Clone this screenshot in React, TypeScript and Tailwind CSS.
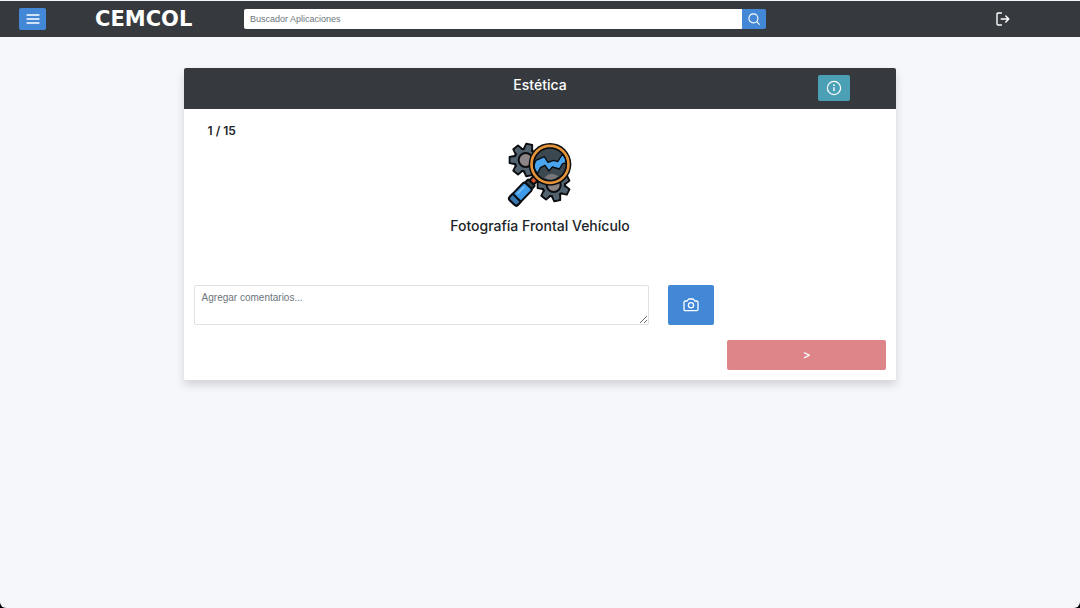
import React from 'react';

const gearTeeth = [0, 51.4, 102.9, 154.3, 205.7, 257.1, 308.6];

function Gear({ x, y, rotate }: { x: number; y: number; rotate: number }) {
  return (
    <g transform={`translate(${x} ${y}) rotate(${rotate})`}>
      <g fill="#52636f" stroke="#0b0d10" strokeWidth="6" strokeLinejoin="round">
        {gearTeeth.map((angle) => (
          <path key={angle} transform={`rotate(${angle})`} d="M-13 -30 L-9 -48 H9 L13 -30 Z" />
        ))}
        <circle r="34" />
      </g>
      <g fill="#52636f">
        {gearTeeth.map((angle) => (
          <path key={angle} transform={`rotate(${angle})`} d="M-10 -27 L-7 -45 H7 L10 -27 Z" />
        ))}
      </g>
      <circle r="21" fill="#8b8585" stroke="#0b0d10" strokeWidth="6" />
    </g>
  );
}

function InspectionIcon() {
  return (
    <svg viewBox="36 18 198 204" className="h-[68px] w-[66px]" aria-hidden="true">
      <Gear x={92} y={75} rotate={270} />
      <Gear x={176} y={150} rotate={270} />
      <g transform="translate(112 140) rotate(44)" stroke="#0b0d10" strokeWidth="6" strokeLinejoin="round">
        <rect x="-9" y="-18" width="18" height="24" fill="#d9532c" />
        <rect x="-14" y="3" width="28" height="22" rx="3" fill="#34414b" />
        <rect x="-17" y="17" width="34" height="70" rx="7" fill="#3f9be8" />
        <path d="M-17 67 H17 V80 Q17 87 10 87 H-10 Q-17 87 -17 80 Z" fill="#3878ae" />
        <path d="M-7 29 V55" stroke="#79bdf3" strokeWidth="5" strokeLinecap="round" />
      </g>
      <circle cx="165" cy="88" r="64" fill="#0b0d10" />
      <circle cx="165" cy="88" r="55" fill="#3c4850" stroke="#e6943a" strokeWidth="9" />
      <circle cx="165" cy="88" r="49" fill="#3c4850" stroke="#0b0d10" strokeWidth="5" />
      <path d="M149 128 Q157 117 169 116 Q181 116 190 124 Q170 142 149 128 Z" fill="#77777a" />
      <path
        d="M118 88 L123 76 L148 65 L159 82 L176 76 L188 80 L203 57 Q213 70 213 84 L203 86 L193 102 L172 96 L162 108 L150 91 L136 98 L128 115 Q116 103 118 88 Z"
        fill="#4aa5f0"
        stroke="#0b0d10"
        strokeWidth="4"
        strokeLinejoin="round"
      />
    </svg>
  );
}

function MenuIcon() {
  return (
    <svg viewBox="0 0 14 12" className="h-3 w-3.5" fill="none" stroke="white" strokeWidth="1.3" strokeLinecap="round" aria-hidden="true">
      <path d="M1 2h12M1 6h12M1 10h12" />
    </svg>
  );
}

function SearchIcon() {
  return (
    <svg viewBox="0 0 12 12" className="size-3" fill="none" stroke="white" strokeWidth="1.1" strokeLinecap="round" aria-hidden="true">
      <circle cx="5.4" cy="5.4" r="4.5" />
      <path d="m8.7 8.7 2.6 2.6" />
    </svg>
  );
}

function LogoutIcon() {
  return (
    <svg viewBox="0 0 14 14" className="size-3.5" fill="none" stroke="white" strokeWidth="1.4" strokeLinecap="round" strokeLinejoin="round" aria-hidden="true">
      <path d="M5.4 1H2.2Q1 1 1 2.2v9.6Q1 13 2.2 13h3.2M5.2 7h7.6M9.8 4l3 3-3 3" />
    </svg>
  );
}

function InfoIcon() {
  return (
    <svg viewBox="0 0 16 16" className="size-4" fill="none" stroke="white" strokeWidth="1.2" aria-hidden="true">
      <circle cx="8" cy="8" r="6.6" />
      <path d="M8 7.2v3.9" strokeWidth="1.4" />
      <circle cx="8" cy="5.2" r=".9" fill="white" stroke="none" />
    </svg>
  );
}

function CameraIcon() {
  return (
    <svg viewBox="0 0 16 14" className="h-3.5 w-4" fill="none" stroke="white" strokeWidth="1.3" strokeLinejoin="round" aria-hidden="true">
      <path d="M1 4.5Q1 3 2.5 3h1.700L5.600 1h4.800l1.400 2h1.700Q15 3 15 4.500v6.700q0 1.500-1.500 1.500h-11Q1 12.700 1 11.200Z" />
      <circle cx="8" cy="7.300" r="2.600" />
    </svg>
  );
}

export default function App() {
  return (
    <div className="flex min-h-screen bg-black font-['Inter',sans-serif] text-[#212529]">
      <div className="flex-1 rounded-b-md bg-[#f5f7fb] pt-px">
        <header className="grid h-9 grid-cols-[244fr_522fr_314fr] items-center bg-[#363a3e]">
          <div className="flex items-center pl-[19px]">
            <button type="button" aria-label="Menú" className="flex h-[22px] w-[27px] items-center justify-center rounded-xs bg-[#4388d6]">
              <MenuIcon />
            </button>
            <a href="#" className="ml-[49px] font-['DejaVu_Sans',sans-serif] text-[21px] leading-6 font-bold text-white">
              CEMCOL
            </a>
          </div>
          <form className="flex h-5" onSubmit={(event) => event.preventDefault()}>
            <input
              type="search"
              aria-label="Buscador Aplicaciones"
              placeholder="Buscador Aplicaciones"
              className="min-w-0 flex-1 rounded-l-xs bg-white px-1.5 pt-px font-['Liberation_Sans',sans-serif] text-[9px] text-[#212529] outline-none placeholder:text-[#6c757d]"
            />
            <button type="submit" aria-label="Buscar" className="flex w-6 items-center justify-center rounded-r-xs bg-[#4388d6]">
              <SearchIcon />
            </button>
          </form>
          <div className="flex justify-end pr-[70px]">
            <button type="button" aria-label="Cerrar sesión">
              <LogoutIcon />
            </button>
          </div>
        </header>

        <main className="mx-auto mt-[31px] w-[66%] rounded-xs bg-white shadow-[0_5px_10px_rgba(0,0,0,0.15)]">
          <div className="grid h-[41px] grid-cols-12 rounded-t-xs bg-[#363a3e]">
            <h1 className="col-span-8 col-start-3 pt-[7px] text-center text-[14px] leading-5 font-medium text-white">Estética</h1>
            <div className="col-span-2 flex items-start justify-center pt-[7px]">
              <button type="button" aria-label="Información" className="mr-[6px] flex h-[26px] w-8 items-center justify-center rounded-xs bg-[#4ca0b5]">
                <InfoIcon />
              </button>
            </div>
          </div>

          <p className="px-6 pt-3 text-[12px] leading-5 font-semibold">1 / 15</p>

          <section className="flex flex-col items-center">
            <InspectionIcon />
            <h2 className="mt-[7px] text-[14px] leading-5 font-medium">Fotografía Frontal Vehículo</h2>
          </section>

          <form className="mt-[49px] pb-[10px]" onSubmit={(event) => event.preventDefault()}>
            <div className="grid grid-cols-12">
              <div className="col-span-8 px-[10px]">
                <textarea
                  aria-label="Comentarios"
                  placeholder="Agregar comentarios..."
                  className="block h-10 w-full resize-y rounded-xs border border-[#dee2e6] bg-white px-[7px] py-1 font-['Liberation_Sans',sans-serif] text-[10px] leading-4 outline-none placeholder:text-[#6c757d]"
                />
              </div>
              <div className="col-span-4 px-[9px]">
                <button type="button" aria-label="Tomar fotografía" className="flex h-10 w-[46px] items-center justify-center rounded-xs bg-[#4388d6]">
                  <CameraIcon />
                </button>
              </div>
            </div>
            <div className="mt-[15px] grid grid-cols-12">
              <div className="col-span-3 col-start-10 pr-[10px] pl-[9px]">
                <button type="submit" className="h-[30px] w-full rounded-xs bg-[#de8589] text-xs font-medium text-white">
                  &gt;
                </button>
              </div>
            </div>
          </form>
        </main>
      </div>
    </div>
  );
}
